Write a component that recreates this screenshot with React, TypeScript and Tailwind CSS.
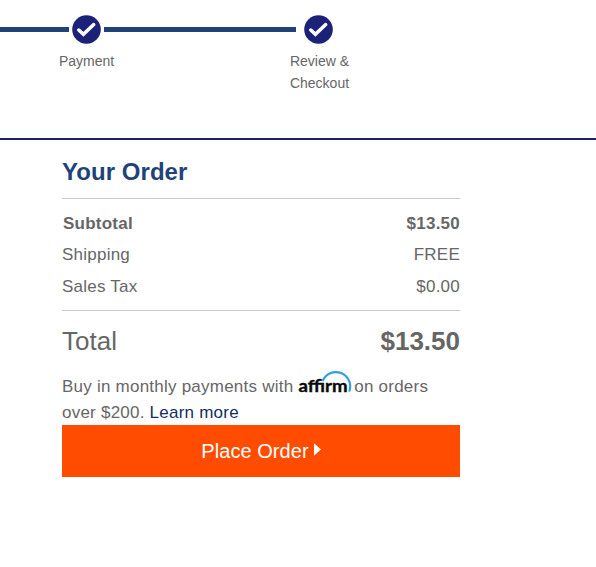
const steps = [
  { label: 'Payment', width: 'w-[70px]' },
  { label: 'Review & Checkout', width: 'w-[70px]' },
];

const rows = [
  { label: 'Subtotal', value: '$13.50', bold: true },
  { label: 'Shipping', value: 'FREE', bold: false },
  { label: 'Sales Tax', value: '$0.00', bold: false },
];

const CheckIcon = () => (
  <svg width="29" height="29" viewBox="0 0 29 29" className="block shrink-0">
    <circle cx="14.5" cy="14.5" r="14.3" fill="#1b2278" />
    <path d="M6.8 15l4.6 4.3L21.7 9.6" fill="none" stroke="#fff" strokeWidth="3.5" strokeLinecap="round" />
  </svg>
);

const AffirmLogo = () => (
  <span className="inline-flex h-[14px] w-[51px] items-end align-baseline">
    <svg width="54" height="20" viewBox="0 0 54 20" className="block shrink-0 overflow-visible">
      <text
        x="0.5"
        y="19.5"
        textLength="49"
        lengthAdjust="spacingAndGlyphs"
        fontFamily="Lato, sans-serif"
        fontWeight="700"
        fontSize="17.5"
        letterSpacing="0"
        fill="#0a0a0a"
        stroke="#0a0a0a"
        strokeWidth="0.4"
      >
        affirm
      </text>
      <path d="M24.6 9.2A14 14 0 0 1 51.2 19.6" fill="none" stroke="#2f9fe0" strokeWidth="2.2" />
    </svg>
  </span>
);

const App = () => {
  return (
    <main className="h-[567px] w-[596px] overflow-hidden bg-white font-['Liberation_Sans',Arial,sans-serif] text-[#666]">
      <header className="h-[140px] border-b-2 border-[#1b2070] pt-[15px]">
        <div className="flex items-center">
          <div className="h-[5px] w-[69px] bg-[#1f4379]" />
          <div className="mx-[3px]">
            <CheckIcon />
          </div>
          <div className="mr-2 h-[5px] w-[192px] bg-[#1f4379]" />
          <CheckIcon />
        </div>
        <div className="flex gap-[163px] pl-[51.5px] pt-[6px] text-center text-sm leading-[22px]">
          {steps.map((step) => (
            <div key={step.label} className={step.width}>
              {step.label}
            </div>
          ))}
        </div>
      </header>

      <section className="ml-[62px] w-[398px]">
        <h2 className="h-[59px] border-b border-[#c8c8c8] pt-[14px] text-2xl leading-9 font-bold tracking-[0.05px] text-[#1f4379]">
          Your Order
        </h2>

        <div className="h-[112px] border-b border-[#c8c8c8] pt-[9px] text-[17px] leading-[31.4px] tracking-[0.23px]">
          {rows.map((row) => (
            <div key={row.label} className={row.bold ? 'flex justify-between pl-px font-bold' : 'flex justify-between'}>
              <span>{row.label}</span>
              <span>{row.value}</span>
            </div>
          ))}
        </div>

        <div className="flex h-[63px] items-center justify-between pb-[3px] text-[26px]">
          <span>Total</span>
          <span className="font-bold">$13.50</span>
        </div>

        <p className="h-[51px] text-[17px] leading-[26px] tracking-[0.23px]">
          Buy in monthly payments with <AffirmLogo /> on orders over $200.{' '}
          <a href="#" className="text-[#12305f]">
            Learn more
          </a>
        </p>

        <button
          type="button"
          className="flex h-[52px] w-full items-center justify-center bg-[#ff4c00] text-xl tracking-[0.05px] text-white"
        >
          Place Order
          <svg width="7" height="13" viewBox="0 0 7 13" className="mb-[3px] ml-[5px]">
            <path d="M0 0.3v12.4L7 6.5z" fill="#fff" />
          </svg>
        </button>
      </section>
    </main>
  );
};

export default App;
